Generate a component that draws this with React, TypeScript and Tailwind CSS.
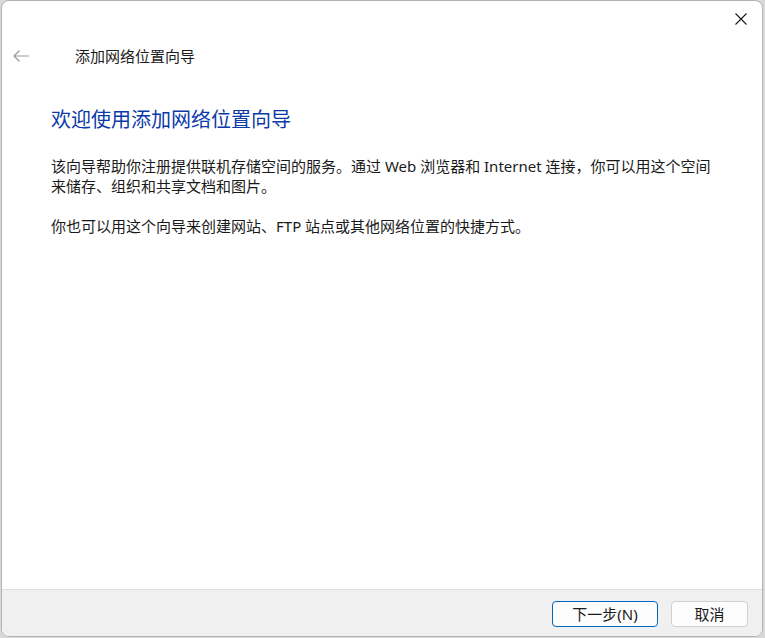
export default function App() {
  const font = { fontFamily: '"Noto Sans", "Noto Sans CJK SC", sans-serif' }
  return (
    <div className="w-[765px] h-[638px] bg-[#d9d9d9] pl-[1px] pr-[2px] pb-[1px]" style={font}>
      <div className="h-full flex flex-col bg-white border border-[#b4b4b4] rounded-[8px] overflow-hidden">
        <div className="h-[35px] flex justify-end items-start pr-[14px] pt-[11px]">
          <svg width="14" height="14" viewBox="0 0 14 14" className="text-[#1a1a1a]">
            <path d="M1.5 1.5 L12.5 12.5 M12.5 1.5 L1.5 12.5" stroke="currentColor" strokeWidth="1.1" fill="none" />
          </svg>
        </div>
        <div className="h-[40px] flex items-center">
          <svg width="18" height="14" viewBox="0 0 18 14" className="ml-[10px] text-[#9a9a9a]">
            <path d="M17 7 H2 M7.5 1.5 L2 7 L7.5 12.5" stroke="currentColor" strokeWidth="1.2" fill="none" />
          </svg>
          <span className="ml-[45px] text-[15px] leading-[20px] text-[#1a1a1a]">添加网络位置向导</span>
        </div>
        <div className="pl-[49px] pt-[30px]">
          <h1 className="text-[20px] leading-[28px] text-[#0b3aa8]">欢迎使用添加网络位置向导</h1>
          <p className="mt-[22px] text-[15px] leading-[20px] text-[#1a1a1a]">
            该向导帮助你注册提供联机存储空间的服务。通过 Web 浏览器和 Internet 连接，你可以用这个空间
            <br />
            来储存、组织和共享文档和图片。
          </p>
          <p className="mt-[20px] text-[15px] leading-[20px] text-[#1a1a1a]">
            你也可以用这个向导来创建网站、FTP 站点或其他网络位置的快捷方式。
          </p>
        </div>
        <div className="mt-auto h-[47px] bg-[#f0f0f0] border-t border-[#dfdfdf] flex justify-end items-start pt-[11px] pr-[14px] gap-[13px]">
          <button className="w-[106px] h-[26px] rounded-[4px] border border-[#0067c0] bg-[#fdfdfd] text-[15px] leading-[20px] text-[#1a1a1a]">
            下一步(N)
          </button>
          <button className="w-[77px] h-[26px] rounded-[4px] border border-[#d0d0d0] bg-[#fdfdfd] text-[15px] leading-[20px] text-[#1a1a1a]">
            取消
          </button>
        </div>
      </div>
    </div>
  )
}
